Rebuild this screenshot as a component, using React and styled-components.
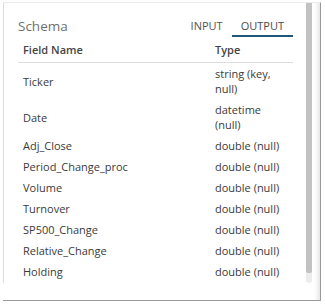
import React from "react";
import styled, { createGlobalStyle } from "styled-components";

const rows = [
  { name: "Ticker", type: "string (key, null)" },
  { name: "Date", type: "datetime (null)" },
  { name: "Adj_Close", type: "double (null)" },
  { name: "Period_Change_proc", type: "double (null)" },
  { name: "Volume", type: "double (null)" },
  { name: "Turnover", type: "double (null)" },
  { name: "SP500_Change", type: "double (null)" },
  { name: "Relative_Change", type: "double (null)" },
  { name: "Holding", type: "double (null)" },
];

const GlobalStyle = createGlobalStyle`
  body {
    margin: 0;
    background: #ffffff;
    font-family: "Open Sans", "Noto Sans", sans-serif;
  }
`;

export default function App() {
  return (
    <>
      <GlobalStyle />
      <Panel>
        <Viewport>
          <Content>
            <TitleRow>
              <Title>Schema</Title>
              <Tabs>
                <Tab>INPUT</Tab>
                <Tab active>OUTPUT</Tab>
              </Tabs>
            </TitleRow>
            <Table>
              <thead>
                <tr>
                  <HeadCell>Field Name</HeadCell>
                  <HeadCell type>Type</HeadCell>
                </tr>
              </thead>
              <tbody>
                {rows.map((r) => (
                  <tr key={r.name}>
                    <Cell>{r.name}</Cell>
                    <Cell>{r.type}</Cell>
                  </tr>
                ))}
              </tbody>
            </Table>
          </Content>
          <ScrollTrack>
            <ScrollThumb />
          </ScrollTrack>
        </Viewport>
      </Panel>
    </>
  );
}

const Panel = styled.div`
  margin: 2px 0 0 3px;
  width: 318px;
  height: 299px;
  box-sizing: border-box;
  border-top: 1px solid #ececec;
  border-right: 1px solid #9a9a9a;
  border-bottom: 1px solid #9a9a9a;
  box-shadow: inset -7px 0 5px -5px rgba(0, 0, 0, 0.12);
`;

const Viewport = styled.div`
  display: flex;
  height: 280px;
  border-left: 1px solid #dcdcdc;
`;

const Content = styled.div`
  width: 302px;
  box-sizing: border-box;
  padding: 12px 13px 0 14px;
  overflow: hidden;
`;

const ScrollTrack = styled.div`
  width: 6px;
  display: flex;
  flex-direction: column;
  background: #ececec;
  border-radius: 0 0 3px 3px;
`;

const ScrollThumb = styled.div`
  height: 270px;
  background: #c2c2c2;
  border-radius: 0 0 2px 2px;
`;

const TitleRow = styled.div`
  display: flex;
  justify-content: space-between;
  align-items: center;
`;

const Title = styled.div`
  font-size: 13.5px;
  line-height: 20px;
  color: #707070;
`;

const Tabs = styled.div`
  display: flex;
`;

const Tab = styled.div`
  padding: 4px 9px 2px;
  font-size: 11px;
  line-height: 14px;
  color: ${(p) => (p.active ? "#4a4a4a" : "#555555")};
  border-bottom: 2px solid ${(p) => (p.active ? "#1e5a78" : "transparent")};
`;

const Table = styled.table`
  width: 100%;
  table-layout: fixed;
  border-collapse: collapse;
  margin-top: 1px;
  font-size: 11px;
  color: #3a3a3a;
`;

const HeadCell = styled.th`
  box-sizing: border-box;
  text-align: left;
  font-weight: 600;
  color: #454545;
  padding: 5px 5px;
  line-height: 14px;
  border-bottom: 1px solid #dedede;
  width: ${(p) => (p.type ? "83px" : "auto")};
`;

const Cell = styled.td`
  padding: 3px 5px;
  line-height: 15px;
  vertical-align: middle;
`;
